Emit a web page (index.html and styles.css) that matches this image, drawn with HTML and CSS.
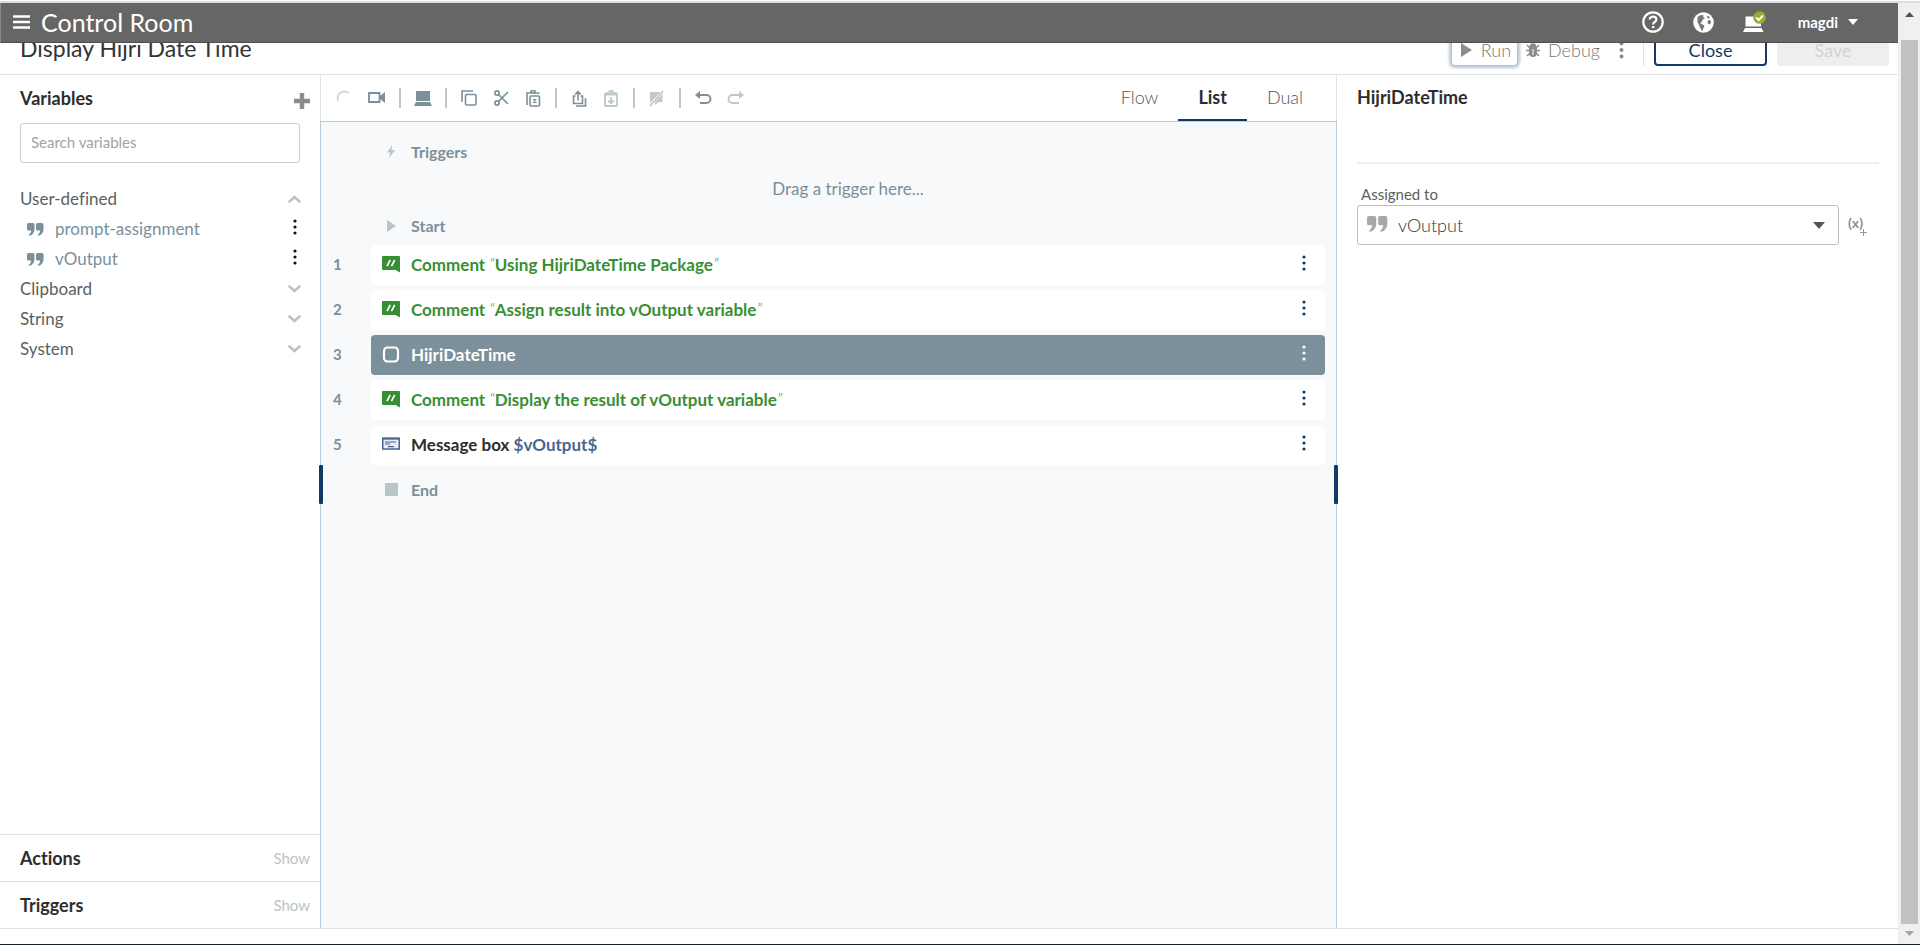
FILE: index.html
```html
<!DOCTYPE html>
<html lang="en">
<head>
<meta charset="utf-8">
<title>Control Room</title>
<link rel="stylesheet" href="styles.css">
</head>
<body>
<svg class="defs" aria-hidden="true">
  <symbol id="dots" viewBox="0 0 4 16"><circle cx="2" cy="2" r="1.6"/><circle cx="2" cy="8" r="1.6"/><circle cx="2" cy="14" r="1.6"/></symbol>
  <symbol id="quote" viewBox="0 0 17 13"><path d="M1.5 0H6a1.5 1.5 0 0 1 1.5 1.500V6.500C7.500 9 5.500 12 3.500 12.500H1.200C3 11 4 9.500 4.200 7.500H1.500A1.500 1.500 0 0 1 0 6V1.500A1.500 1.500 0 0 1 1.500 0zM10.500 0H15a1.500 1.500 0 0 1 1.500 1.500V6.500C16.500 9 14.500 12 12.500 12.500H10.200C12 11 13 9.500 13.200 7.500H10.500A1.500 1.500 0 0 1 9 6V1.500A1.500 1.500 0 0 1 10.500 0z"/></symbol>
  <symbol id="chev" viewBox="0 0 13 8"><path d="M1.500 1.500l5 4.500 5-4.500" fill="none" stroke="currentColor" stroke-width="2.600" stroke-linecap="round"/></symbol>
  <symbol id="comment" viewBox="0 0 18 17"><path d="M0 1a1 1 0 0 1 1-1h16a1 1 0 0 1 1 1v15.500L13.500 14H1a1 1 0 0 1-1-1z"/><path d="M5 10.200L8.200 3.800M9.500 10.200l3.200-6.400" stroke="#fff" stroke-width="1.700"/></symbol>
</svg>
<div class="screen">
  <div class="page">
    <header class="topbar">
      <button class="plain menu" aria-label="Menu"><svg width="17" height="14"><path d="M0 1.500h17M0 7h17M0 12.500h17" stroke="#fff" stroke-width="2.600"/></svg></button>
      <h1 class="brand">Control Room</h1>
      <nav class="topbar-tools">
        <button class="plain" aria-label="Help"><svg width="22" height="22" viewBox="0 0 22 22" fill="none" stroke="#fff"><circle cx="11" cy="11" r="9.700" stroke-width="2.200"/><path d="M7.700 8.600C7.700 6.700 9.200 5.600 11 5.600s3.400 1.100 3.400 2.900c0 2.400-3.200 2.500-3.200 4.900" stroke-width="2.200"/><path d="M10 15h2.400v2.200H10z" fill="#fff" stroke="none"/></svg></button>
        <button class="plain" aria-label="Language"><svg width="21" height="21" viewBox="0 0 21 21"><circle cx="10.500" cy="10.500" r="10.300" fill="#fff"/><path d="M4.500 5l3-2 3.500.500-1 1.500 2 1-2.500 2-1 2.500-1.500.500 2.500 1.500 2 1-1 2.500-1.500 3.500-1-2.500-1.500-2.500-.500-2-1.500-2zM13.500 4.500l2-.500 1.500 2-2 .500zM15 8.500l2.500-.500.500 3-2 1.500-1.500-1.500z" fill="#777"/></svg></button>
        <button class="plain" aria-label="Devices"><svg width="23" height="22" viewBox="0 0 23 22"><path d="M2.500 5.500h15.500v10H2.500zM2 17h16.500l2 4H0z" fill="#fff"/><circle cx="16.500" cy="6.500" r="6.300" fill="#9aa92f"/><path d="M13.200 6.500l2.500 2.600 4.200-4.600" fill="none" stroke="#fff" stroke-width="1.900"/></svg></button>
        <button class="plain user">magdi <svg width="10" height="6"><path d="M0 0h10L5 6z" fill="#fff"/></svg></button>
      </nav>
    </header>

    <div class="filebar">
      <div class="filebar-row">
        <h2 class="file-title">Display Hijri Date Time</h2>
        <button class="run"><svg width="11" height="14"><path d="M0 0l11 7-11 7z" fill="#8c8c8c"/></svg>Run</button>
        <button class="plain debug"><svg width="14" height="14" viewBox="0 0 14 14" fill="none" stroke="#8c8c8c" stroke-width="1.500"><path d="M3.800 4.500h6.400v5.500a3.200 3.200 0 0 1-6.400 0z" fill="#8c8c8c"/><path d="M0 7.500h14M1 13l3-3M13 13l-3-3M1 2l3 3M13 2l-3 3"/><path d="M4.500 3.500a2.500 2.500 0 0 1 5 0z" fill="#8c8c8c"/><path d="M7 6v6" stroke="#fff" stroke-width="1"/></svg><span>Debug</span></button>
        <button class="plain more" aria-label="More"><svg width="5" height="18" fill="#8c8c8c"><circle cx="2.500" cy="2.500" r="2"/><circle cx="2.500" cy="9" r="2"/><circle cx="2.500" cy="15.500" r="2"/></svg></button>
        <span class="file-sep"></span>
        <button class="btn">Close</button>
        <button class="btn btn-off" disabled>Save</button>
      </div>
    </div>

    <div class="workspace">
      <aside class="sidebar">
        <div class="side-head">
          <h3 class="panel-title">Variables</h3>
          <button class="plain" aria-label="Add variable"><svg width="16" height="16"><path d="M8 0v16M0 8h16" stroke="#8c8c8c" stroke-width="4.400"/></svg></button>
        </div>
        <input class="search" type="text" placeholder="Search variables" aria-label="Search variables">
        <ul class="tree">
          <li class="group"><span>User-defined</span><svg class="chev up" width="13" height="8"><use href="#chev"/></svg></li>
          <li class="var"><svg class="q" width="17" height="13"><use href="#quote"/></svg><span>prompt-assignment</span><button class="plain" aria-label="Variable options"><svg width="4" height="16"><use href="#dots"/></svg></button></li>
          <li class="var"><svg class="q" width="17" height="13"><use href="#quote"/></svg><span>vOutput</span><button class="plain" aria-label="Variable options"><svg width="4" height="16"><use href="#dots"/></svg></button></li>
          <li class="group"><span>Clipboard</span><svg class="chev" width="13" height="8"><use href="#chev"/></svg></li>
          <li class="group"><span>String</span><svg class="chev" width="13" height="8"><use href="#chev"/></svg></li>
          <li class="group"><span>System</span><svg class="chev" width="13" height="8"><use href="#chev"/></svg></li>
        </ul>
        <div class="drawer"><h3 class="panel-title">Actions</h3><button class="plain show">Show</button></div>
        <div class="drawer"><h3 class="panel-title">Triggers</h3><button class="plain show">Show</button></div>
      </aside>

      <main class="editor">
        <div class="toolbar">
          <span class="tool"><svg width="18" height="16" fill="none"><path d="M2 11C0 4 6-1 13 3" stroke="#d4d4d4" stroke-width="1.800"/></svg></span>
          <button class="tool" aria-label="Record"><svg width="18" height="12"><path d="M1 1h10.500v9H1z" fill="none" stroke="currentColor" stroke-width="1.800"/><path d="M12 4l5-4v11l-5-4z"/></svg></button>
          <span class="sep"></span>
          <button class="tool" aria-label="Device"><svg width="18" height="15"><path d="M2 0h14v10H2zM2 11h14l2 4H0z"/></svg></button>
          <span class="sep"></span>
          <button class="tool" aria-label="Copy"><svg width="16" height="16" fill="none" stroke="currentColor" stroke-width="1.600"><path d="M1 12V1h11"/><rect x="4.500" y="4.500" width="10.500" height="10.500" rx="1"/></svg></button>
          <button class="tool" aria-label="Cut"><svg width="15" height="16" fill="none" stroke="currentColor" stroke-width="1.700"><circle cx="3" cy="3" r="2.100"/><circle cx="3" cy="13" r="2.100"/><path d="M4.500 4.500L14 14M4.500 11.500L14 2"/></svg></button>
          <button class="tool" aria-label="Paste"><svg width="15" height="17" fill="none" stroke="currentColor" stroke-width="1.600"><path d="M1 15V3h11.500v1M4 2.500h6" /><path d="M5 2a2 2 0 0 1 4 0"/><rect x="4" y="6" width="9.500" height="10" rx="1"/><path d="M7 9.500h3.500M7 12.500h3.500M8.750 9.500v3" stroke-width="1.200"/></svg></button>
          <span class="sep"></span>
          <button class="tool" aria-label="Share"><svg width="15" height="17" fill="none" stroke="currentColor" stroke-width="1.600"><path d="M3.500 6H1.500v7.500h9V6h-2M6 10.500V2M3.200 4.500L6 1.500l2.800 3"/><path d="M13.500 8v8H4"/></svg></button>
          <button class="tool off" aria-label="Shared paste"><svg width="14" height="17" fill="none" stroke="currentColor" stroke-width="1.800"><rect x="1" y="3.500" width="12" height="12.500" rx="1"/><path d="M1 4h12" stroke-width="3"/><path d="M5 2.500a2 2 0 0 1 4 0M7 7v6M4.200 10.500L7 13.200l2.800-2.700"/></svg></button>
          <span class="sep"></span>
          <button class="tool off" aria-label="Disable action"><svg width="16" height="17"><path d="M1 2h10.500L1 13zM13.500 4V12H9.500L6 15V12z"/><path d="M1 16L14 1" stroke="currentColor" stroke-width="1.800"/></svg></button>
          <span class="sep"></span>
          <button class="tool" aria-label="Undo"><svg width="17" height="14"><path d="M0 4l5-4v8z"/><path d="M4 4h7.500a4 4 0 0 1 0 8H5" fill="none" stroke="currentColor" stroke-width="1.900"/></svg></button>
          <button class="tool off" aria-label="Redo"><svg width="17" height="14"><path d="M17 4l-5-4v8z"/><path d="M13 4H5.500a4 4 0 0 0 0 8H12" fill="none" stroke="currentColor" stroke-width="1.900"/></svg></button>
          <div class="tabs">
            <button class="tab">Flow</button>
            <button class="tab on">List</button>
            <button class="tab">Dual</button>
          </div>
        </div>

        <div class="canvas">
          <div class="mark"><svg width="20" height="14" viewBox="-6 0 20 14"><path d="M5 0L0 7.500h3.200l-1 5.500L8 5H4.500z"/></svg><span>Triggers</span></div>
          <p class="drop">Drag a trigger here...</p>
          <div class="mark"><svg width="20" height="12" viewBox="-6 0 20 12"><path d="M0 0l9 6-9 6z"/></svg><span>Start</span></div>
          <ol class="steps">
            <li class="step"><span class="num">1</span><div class="card green"><svg class="ic" width="18" height="17"><use href="#comment"/></svg><span class="txt">Comment <i>“</i>Using HijriDateTime Package<i>”</i></span><button class="plain" aria-label="Step options"><svg width="4" height="16"><use href="#dots"/></svg></button></div></li>
            <li class="step"><span class="num">2</span><div class="card green"><svg class="ic" width="18" height="17"><use href="#comment"/></svg><span class="txt">Comment <i>“</i>Assign result into vOutput variable<i>”</i></span><button class="plain" aria-label="Step options"><svg width="4" height="16"><use href="#dots"/></svg></button></div></li>
            <li class="step"><span class="num">3</span><div class="card picked"><svg class="ic" width="18" height="17" fill="none"><rect x="2" y="1.500" width="14" height="14" rx="3.500" stroke="#fff" stroke-width="2.200"/></svg><span class="txt">HijriDateTime</span><button class="plain" aria-label="Step options"><svg width="4" height="16"><use href="#dots"/></svg></button></div></li>
            <li class="step"><span class="num">4</span><div class="card green"><svg class="ic" width="18" height="17"><use href="#comment"/></svg><span class="txt">Comment <i>“</i>Display the result of vOutput variable<i>”</i></span><button class="plain" aria-label="Step options"><svg width="4" height="16"><use href="#dots"/></svg></button></div></li>
            <li class="step"><span class="num">5</span><div class="card"><svg class="ic" width="18" height="17"><path d="M.750 2.500h16.500v10.500H.750z" fill="#e8edf4" stroke="#4a6590" stroke-width="1.500"/><path d="M0 2.500h18" stroke="#4a6590" stroke-width="2"/><path d="M3 6h11M3 8h5M6 10.700h6" stroke="#4a6590" stroke-width="1.200"/></svg><span class="txt">Message box <span class="value">$vOutput$</span></span><button class="plain" aria-label="Step options"><svg width="4" height="16"><use href="#dots"/></svg></button></div></li>
          </ol>
          <div class="mark end"><svg width="20" height="13" viewBox="-4 0 20 13"><path d="M0 0h13v13H0z"/></svg><span>End</span></div>
        </div>
      </main>

      <aside class="inspector">
        <h3 class="panel-title inspector-head">HijriDateTime</h3>
        <label class="field-label" for="assigned">Assigned to</label>
        <div class="field">
          <div class="picker">
            <svg class="picker-q" width="21" height="16"><use href="#quote"/></svg>
            <select id="assigned"><option>vOutput</option></select>
            <svg class="picker-arrow" width="12" height="7"><path d="M0 0h12L6 7z" fill="#555"/></svg>
          </div>
          <button class="plain newvar" aria-label="Create variable">(x)<svg width="7" height="7"><path d="M3.500 0v7M0 3.500h7" stroke="#9a9a9a"/></svg></button>
        </div>
      </aside>
    </div>
    <div class="below"></div>
  </div>
  <div class="scroll">
    <svg width="9" height="5"><path d="M4.500 0L9 5H0z" fill="#505050"/></svg>
    <div class="thumb"></div>
    <svg width="9" height="5"><path d="M0 0h9L4.500 5z" fill="#a3a3a3"/></svg>
  </div>
</div>
</body>
</html>
```
FILE: styles.css
```css
* { box-sizing: border-box; }
html, body { height: 100%; }
body { margin: 0; background: #fff; color: #333; font: 17px/20px Lato, sans-serif; font-variant-ligatures: none; overflow: hidden; }
h1, h2, h3, p, ul, ol { margin: 0; padding: 0; font-weight: inherit; }
ul, ol { list-style: none; }
button, input, select { font: inherit; color: inherit; }
svg { display: block; flex: none; }
svg:not([fill]) { fill: currentColor; }
.defs { position: absolute; width: 0; height: 0; }
.plain { display: flex; align-items: center; border: 0; padding: 0; background: none; cursor: pointer; }

.screen { display: flex; height: 100vh; padding-top: 1px; border-bottom: 1px solid #14202a; }
.page { flex: 1; min-width: 0; display: flex; flex-direction: column; border-top: 2px solid #dcdee5; }

.topbar { flex: none; display: flex; align-items: center; height: 40px; padding: 0 40px 1px 12px; background: #666; border-bottom: 1px solid #504c4f; border-left: 1px solid #8a8a8a; color: #fff; }
.brand { margin-left: 11px; padding-bottom: 1px; font-size: 25px; line-height: 28px; }
.topbar-tools { display: flex; align-items: center; gap: 29px; margin-left: auto; }
.user { gap: 10px; margin-left: 3px; font-size: 15px; font-weight: 700; }

.filebar { flex: none; display: flex; flex-direction: column; justify-content: flex-end; height: 32px; overflow: hidden; border-bottom: 1px solid #dfe2e5; }
.filebar-row { flex: none; display: flex; align-items: center; height: 48px; padding: 0 9px 0 20px; color: #8c8c8c; }
.file-title { margin-right: auto; padding-bottom: 4px; font-size: 23px; line-height: 32px; color: #333; }
.run { display: flex; align-items: center; gap: 9px; height: 32px; padding: 0 6px 0 9px; border: 1px solid #b3c2d0; border-radius: 4px; background: #fff; box-shadow: 0 0 3px 2px #b9c7d4; font-size: 18px; font-weight: 300; color: #777; }
.debug { gap: 8px; margin-left: 8px; font-size: 18px; font-weight: 300; color: #777; }
.debug span { overflow: hidden; }
.more { margin-left: 19px; }
.file-sep { width: 1px; height: 32px; margin: 0 10px 0 19px; background: #dfe2e5; }
.btn { width: 113px; height: 32px; padding: 0; border: 2px solid #123a66; border-radius: 4px; background: #fff; color: #123a66; font-size: 18px; }
.btn-off { width: 112px; margin-left: 10px; border-color: #eee; background: #eee; color: #d2d2d2; }

.workspace { flex: 1; min-height: 0; display: grid; grid-template-columns: 320px minmax(0, 1017fr) minmax(0, 561fr); }
.below { flex: none; height: 16px; border-top: 1px solid #dfe2e5; }
.panel-title { font-size: 18px; line-height: 24px; font-weight: 700; color: #2d2d2d; }

.sidebar { display: flex; flex-direction: column; }
.side-head { display: flex; justify-content: space-between; align-items: center; height: 48px; padding: 4px 10px 0 20px; }
.side-head .panel-title { padding-bottom: 6px; }
.search { height: 40px; margin: 0 20px; padding: 0 10px 2px; border: 1px solid #ccc; border-radius: 3px; background: #fff; font-size: 15px; }
.search::placeholder { color: #a3a3a3; opacity: 1; }
.tree { flex: 1; padding-top: 21px; }
.group, .var { display: flex; align-items: center; justify-content: space-between; height: 30px; padding: 0 19px 0 20px; color: #5b5f61; }
.chev { color: #b9c4ca; }
.up { transform: rotate(180deg); }
.var { gap: 11px; padding: 0 23px 0 27px; color: #7b909a; }
.var span { margin-right: auto; }
.var button { padding-bottom: 4px; color: #111; }
.drawer { display: flex; justify-content: space-between; align-items: center; height: 47px; padding: 0 10px 0 20px; border-top: 1px solid #dfe2e5; }
.show { color: #b9c4ca; font-size: 15px; }

.editor { display: flex; flex-direction: column; }
.toolbar { flex: none; display: flex; align-items: center; gap: 8px; height: 46px; padding: 0 13px 0 12px; border: solid #dfe2e5; border-width: 0 1px; color: #7b909a; }
.tool { display: flex; align-items: center; justify-content: center; width: 24px; height: 24px; padding: 0; border: 0; background: none; color: inherit; }
.tool.off { color: #bcc8cd; }
.sep { width: 2px; height: 20px; margin: 0 2px; background: #bcc8cd; }
.tabs { align-self: stretch; display: flex; margin-left: auto; }
.tab { padding: 0 20px; border: 0; border-bottom: 2px solid transparent; background: none; font-size: 18px; font-weight: 300; color: #555; }
.tab.on { border-color: #123a66; font-weight: 700; color: #2d2d2d; }

.canvas { flex: 1; padding: 11px 11px 0 0; border: 1px solid #b4cfdf; background: #f8f9fb; margin-bottom: -1px; }
.mark { display: flex; align-items: center; gap: 10px; height: 38px; padding: 0 0 1px 60px; color: #7b909a; font-size: 16px; font-weight: 700; }
.mark svg { fill: #bac5ca; }
.drop { line-height: 36px; padding-left: 50px; text-align: center; color: #7b909a; }
.steps { display: grid; gap: 5px; }
.step { display: grid; grid-template-columns: 50px minmax(0, 1fr); align-items: center; }
.num { padding: 0 0 2px 12px; color: #7b909a; font-size: 15px; font-weight: 700; }
.card { display: flex; align-items: center; height: 40px; padding: 0 19px 1px 11px; border-radius: 4px; background: #fff; font-weight: 700; color: #2d2d2d; }
.card button { margin-left: auto; padding-bottom: 3px; color: #123a66; }
.txt { margin-left: 11px; }
.txt i { font-weight: 300; }
.green { color: #388e34; }
.value { color: #4a6590; }
.picked, .picked button { background: #7b909a; color: #fff; }
.end { position: relative; height: 50px; }
.end::before, .end::after { content: ""; position: absolute; top: 0; left: -2px; width: 4px; height: 39px; border-radius: 1px; background: #123a66; }
.end::after { left: auto; right: -13px; }

.inspector { padding: 0 19px 0 20px; }
.inspector-head { height: 89px; padding-top: 10px; border-bottom: 2px solid #eee; }
.field-label { display: block; margin: 20px 4px 0; padding-bottom: 1px; font-size: 15px; color: #5b5f61; }
.field { display: flex; align-items: center; gap: 9px; }
.picker { position: relative; flex: 1; }
.picker select { appearance: none; width: 100%; height: 40px; padding: 0 40px 1px; border: 1px solid #bfbfbf; border-radius: 3px; background: #fff; font-size: 18px; font-weight: 300; color: #333; }
.picker-q { position: absolute; top: 11px; left: 10px; color: #a8a8a8; }
.picker-arrow { position: absolute; top: 17px; right: 14px; }
.newvar { width: 31px; padding-bottom: 4px; color: #8f8f8f; font-size: 14px; font-weight: 700; }
.newvar svg { margin-top: 18px; margin-left: -3px; }

.scroll { flex: none; width: 22px; display: flex; flex-direction: column; align-items: center; gap: 23px; padding: 9px 2px 8px 3px; border-top: 2px solid #dcdee5; background: #f0f0f0; }
.thumb { flex: 1; align-self: stretch; background: #c1c1c1; }
.scroll svg:last-child { margin-top: -16px; }
```
